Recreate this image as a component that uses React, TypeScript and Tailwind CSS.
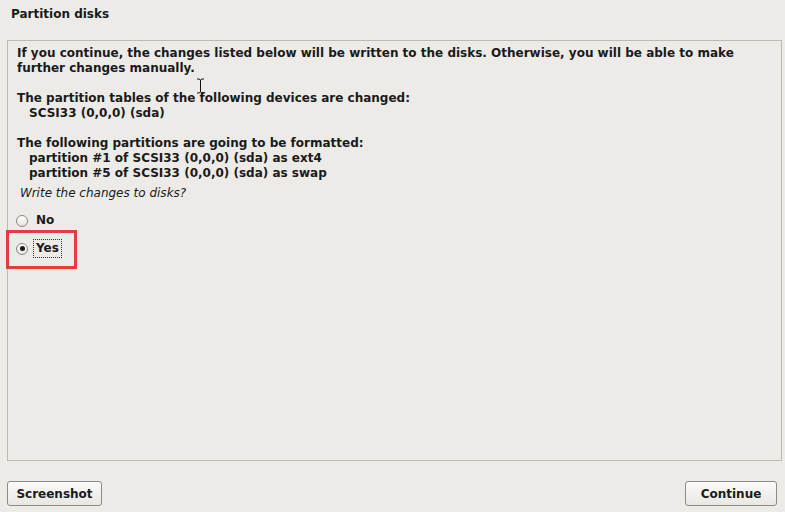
import React from 'react';

const font = { fontFamily: '"DejaVu Sans", "Liberation Sans", sans-serif' };

const Radio: React.FC<{ checked?: boolean }> = ({ checked }) => (
    <span className="w-[12px] h-[12px] rounded-full border border-[#8a8782] bg-gradient-to-b from-[#ffffff] to-[#e6e4e0] flex items-center justify-center shrink-0">
        {checked && <span className="w-[5px] h-[5px] rounded-full bg-[#1a1a1a]" />}
    </span>
);

export default function App() {
    return (
        <div className="w-[785px] h-[512px] bg-[#edebe7] text-[#1a1a1a] flex flex-col relative overflow-hidden" style={font}>
            <div className="h-[40px] pl-[11px] pt-[7px] text-[12px] font-bold leading-[15px]">Partition disks</div>

            <div className="ml-[7px] mr-[3px] h-[421px] border border-[#bdbab4] pl-[9px] pt-[5px] text-[12px] font-bold leading-[15px]">
                <p>If you continue, the changes listed below will be written to the disks. Otherwise, you will be able to make further changes manually.</p>
                <p className="mt-[15px]">The partition tables of the following devices are changed:</p>
                <p className="pl-[12px]">SCSI33 (0,0,0) (sda)</p>
                <p className="mt-[15px]">The following partitions are going to be formatted:</p>
                <p className="pl-[12px]">partition #1 of SCSI33 (0,0,0) (sda) as ext4</p>
                <p className="pl-[12px]">partition #5 of SCSI33 (0,0,0) (sda) as swap</p>
                <p className="pl-[3px] mt-[5px] font-normal italic">Write the changes to disks?</p>

                <label className="mt-[12px] -ml-[1px] flex items-center gap-[8px] h-[15px]">
                    <Radio />
                    <span>No</span>
                </label>
                <div className="mt-[2px] -ml-[11px] w-[71px] h-[39px] border-[3px] border-[#e33d3d] pl-[7px] pt-[6px] flex items-start">
                    <label className="flex items-center gap-[5px]">
                        <Radio checked />
                        <span className="border border-dotted border-[#333] px-[2px] leading-[17px]">Yes</span>
                    </label>
                </div>
            </div>

            <div className="flex justify-between items-center pl-[7px] pt-[20px] pr-[8px]">
                <button className="h-[25px] w-[95px] rounded-[3px] border border-[#8e8b86] bg-gradient-to-b from-[#fbfaf9] to-[#e9e7e3] text-[12px] font-bold">
                    Screenshot
                </button>
                <button className="h-[25px] w-[92px] rounded-[3px] border border-[#8e8b86] bg-gradient-to-b from-[#fbfaf9] to-[#e9e7e3] text-[12px] font-bold">
                    Continue
                </button>
            </div>

            <svg className="absolute left-[196px] top-[78px]" width="9" height="16" viewBox="0 0 9 16">
                <path d="M1 1h2l1.5 1L6 1h2M4.5 2v12M1 15h2l1.5-1L6 15h2" stroke="#111" strokeWidth="1" fill="none" />
            </svg>
        </div>
    );
}
